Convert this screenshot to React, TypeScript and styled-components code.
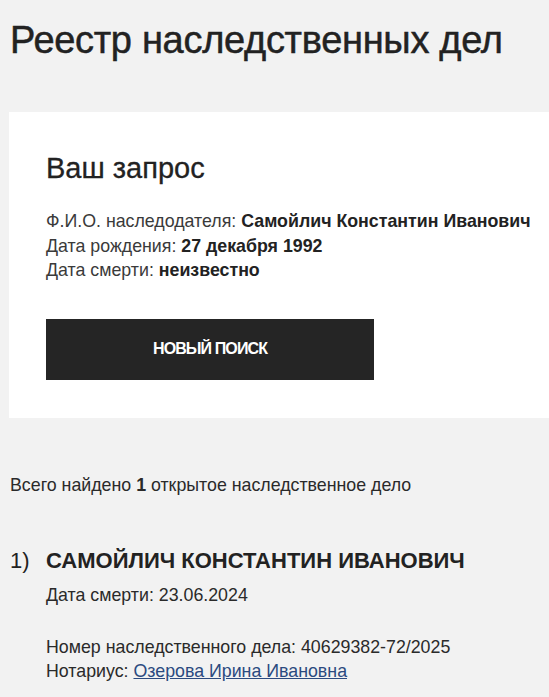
import React from 'react';
import styled, { createGlobalStyle } from 'styled-components';

const GlobalStyle = createGlobalStyle`
  html, body {
    margin: 0;
    padding: 0;
    background: #f2f2f2;
  }
  body {
    font-family: "Liberation Sans", Arial, sans-serif;
    color: #222;
  }
`;

const Page = styled.div`
  padding: 17px 0 0 10px;
`;

const Title = styled.h1`
  margin: 0;
  font-size: 38px;
  line-height: 46px;
  font-weight: 400;
  letter-spacing: -0.3px;
  -webkit-text-stroke: 0.5px #222;
  color: #222;
`;

const QueryCard = styled.section`
  margin: 49px 0 0 -1px;
  background: #fff;
  padding: 40px 10px 38px 37px;
`;

const CardTitle = styled.h2`
  margin: 0;
  font-size: 29px;
  line-height: 32px;
  font-weight: 400;
  -webkit-text-stroke: 0.3px #222;
  color: #222;
`;

const InfoList = styled.div`
  margin-top: 25px;
  font-size: 17.8px;
  line-height: 24.5px;
`;

const Label = styled.span`
  color: #3a3a3a;
`;

const Value = styled.b`
  color: #222;
`;

const SearchButton = styled.button`
  display: block;
  margin-top: 36px;
  width: 328px;
  height: 61px;
  border: none;
  background: #252525;
  color: #fff;
  font-family: "Liberation Sans", Arial, sans-serif;
  font-size: 16px;
  font-weight: 700;
  letter-spacing: -0.9px;
  text-transform: uppercase;
  cursor: pointer;
`;

const Summary = styled.p`
  margin: 55px 0 0;
  font-size: 17.8px;
  line-height: 24px;
  color: #2a2a2a;
`;

const CaseItem = styled.div`
  display: grid;
  grid-template-columns: 36px 1fr;
  margin-top: 52px;
`;

const CaseNumber = styled.div`
  font-size: 22px;
  line-height: 24px;
  color: #222;
`;

const CaseName = styled.div`
  font-size: 22px;
  line-height: 24px;
  font-weight: 700;
  color: #222;
  text-transform: uppercase;
`;

const CaseLine = styled.div<{ $gap?: number }>`
  margin-top: ${(p) => p.$gap ?? 0}px;
  font-size: 17.8px;
  line-height: 24px;
  color: #2a2a2a;
`;

const NotaryLink = styled.a`
  color: #2b4a80;
  text-decoration: underline;
`;

export default function App() {
  return (
    <>
      <GlobalStyle />
      <Page>
        <Title>Реестр наследственных дел</Title>
        <QueryCard>
          <CardTitle>Ваш запрос</CardTitle>
          <InfoList>
            <div>
              <Label>Ф.И.О. наследодателя: </Label>
              <Value>Самойлич Константин Иванович</Value>
            </div>
            <div>
              <Label>Дата рождения: </Label>
              <Value>27 декабря 1992</Value>
            </div>
            <div>
              <Label>Дата смерти: </Label>
              <Value>неизвестно</Value>
            </div>
          </InfoList>
          <SearchButton>Новый поиск</SearchButton>
        </QueryCard>
        <Summary>
          Всего найдено <b>1</b> открытое наследственное дело
        </Summary>
        <CaseItem>
          <CaseNumber>1)</CaseNumber>
          <div>
            <CaseName>Самойлич Константин Иванович</CaseName>
            <CaseLine $gap={10}>Дата смерти: 23.06.2024</CaseLine>
            <CaseLine $gap={28}>Номер наследственного дела: 40629382-72/2025</CaseLine>
            <CaseLine>
              Нотариус: <NotaryLink href="#">Озерова Ирина Ивановна</NotaryLink>
            </CaseLine>
          </div>
        </CaseItem>
      </Page>
    </>
  );
}
